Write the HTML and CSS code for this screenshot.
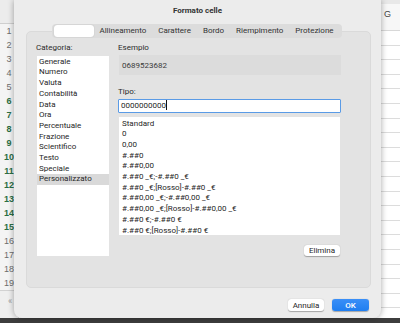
FILE: index.html
```html
<!DOCTYPE html>
<html lang="it">
<head>
    <meta charset="UTF-8" />
    <title>Formato celle</title>
    <link rel="stylesheet" href="styles.css">
</head>
<body>
    <div class="app">
        <div class="sheet">
            <div class="rowhead">
                <div class="corner"></div>
                <div class="num">1</div>
                <div class="num">2</div>
                <div class="num">3</div>
                <div class="num">4</div>
                <div class="num">5</div>
                <div class="num sel">6</div>
                <div class="num sel">7</div>
                <div class="num sel">8</div>
                <div class="num sel">9</div>
                <div class="num sel">10</div>
                <div class="num sel">11</div>
                <div class="num sel">12</div>
                <div class="num sel">13</div>
                <div class="num sel">14</div>
                <div class="num sel">15</div>
                <div class="num">16</div>
                <div class="num">17</div>
                <div class="num">18</div>
                <div class="num">19</div>
                <div class="hscroll">«</div>
            </div>
            <div class="grid">
                <div class="colhead"><span class="col">G</span></div>
                <div class="cells"></div>
            </div>
        </div>
        <div class="taskbar"></div>

        <!-- Formato celle sheet -->
        <div class="dialog">
            <div class="title">Formato celle</div>
            <div class="tabs">
                <span class="tab on"></span>
                <span class="tab">Allineamento</span>
                <span class="tab">Carattere</span>
                <span class="tab">Bordo</span>
                <span class="tab">Riempimento</span>
                <span class="tab">Protezione</span>
            </div>
            <div class="panel">
                <div class="left">
                    <div class="label">Categoria:</div>
                    <ul class="list categories">
                        <li>Generale</li>
                        <li>Numero</li>
                        <li>Valuta</li>
                        <li>Contabilità</li>
                        <li>Data</li>
                        <li>Ora</li>
                        <li>Percentuale</li>
                        <li>Frazione</li>
                        <li>Scientifico</li>
                        <li>Testo</li>
                        <li>Speciale</li>
                        <li class="active">Personalizzato</li>
                    </ul>
                </div>
                <div class="right">
                    <div class="label">Esempio</div>
                    <div class="sample">0689523682</div>
                    <div class="label tipo">Tipo:</div>
                    <div class="input">0000000000<span class="caret"></span></div>
                    <ul class="list formats">
                        <li>Standard</li>
                        <li>0</li>
                        <li>0,00</li>
                        <li>#.##0</li>
                        <li>#.##0,00</li>
                        <li>#.##0 _€;-#.##0 _€</li>
                        <li>#.##0 _€;[Rosso]-#.##0 _€</li>
                        <li>#.##0,00 _€;-#.##0,00 _€</li>
                        <li>#.##0,00 _€;[Rosso]-#.##0,00 _€</li>
                        <li>#.##0 €;-#.##0 €</li>
                        <li>#.##0 €;[Rosso]-#.##0 €</li>
                    </ul>
                    <button class="btn small">Elimina</button>
                </div>
            </div>
            <div class="actions">
                <button class="btn cancel">Annulla</button>
                <button class="btn primary">OK</button>
            </div>
        </div>
    </div>
</body>
</html>
```

FILE: styles.css
```css
* {
    box-sizing: border-box;
    margin: 0;
    padding: 0;
}
body {
    font-family: Roboto, "Liberation Sans", sans-serif;
    font-size: 8px;
    color: #262626;
    background: #fff;
}
.app {
    position: relative;
    width: 400px;
    height: 323px;
    overflow: hidden;
}

/* spreadsheet behind the sheet */
.sheet {
    display: flex;
    height: 318px;
}
.rowhead {
    width: 19px;
    background: #f4f4f4;
    border-right: 1px solid #d6d6d6;
    display: flex;
    flex-direction: column;
}
.corner {
    height: 24px;
    background: #ececec;
    border-bottom: 1px solid #cfcfcf;
}
.num {
    height: 14px;
    line-height: 14px;
    text-align: center;
    font-family: "Liberation Sans", sans-serif;
    font-size: 9px;
    color: #6d6d6d;
}
.num.sel {
    color: #2b6e43;
    font-weight: 700;
}
.hscroll {
    flex: 1;
    border-top: 1px solid #d2d2d2;
    background: #efefef;
    color: #a0a0a0;
    font-size: 9px;
    padding: 5px 0 0 8px;
}
.grid {
    flex: 1;
    display: flex;
    flex-direction: column;
}
.colhead {
    height: 31px;
    display: flex;
    justify-content: flex-end;
    border-top: 4px solid #e8e8e8;
    border-bottom: 1px solid #d8d8d8;
    background: #f7f7f7;
}
.col {
    width: 18px;
    padding: 5px 0 0 2px;
    font-family: "Liberation Sans", sans-serif;
    font-size: 9px;
    color: #444;
}
.cells {
    flex: 1;
    background: repeating-linear-gradient(to bottom, #fff 0 13.6px, #dcdcdc 13.6px 14.6px);
}
.taskbar {
    height: 5px;
    background: #3d3d3d;
}

/* dialog */
.dialog {
    position: absolute;
    left: 14px;
    top: 0;
    width: 367px;
    height: 318px;
    background: #ececec;
    border-radius: 0 0 8px 8px;
    box-shadow: 0 0 6px rgba(0, 0, 0, 0.35);
    display: flex;
    flex-direction: column;
}
.title {
    height: 24px;
    line-height: 21px;
    text-align: center;
    font-weight: 700;
    color: #333;
}
.tabs {
    position: relative;
    z-index: 1;
    align-self: center;
    width: 290px;
    height: 14px;
    margin: 0 2px -7px 0;
    padding: 1px 2px;
    display: flex;
    background: #dcdcdc;
    border-radius: 4px;
}
.tab {
    flex: auto;
    text-align: center;
    line-height: 12px;
    color: #333;
}
.tab.on {
    flex: none;
    width: 40px;
    background: #fff;
    border-radius: 3px;
    box-shadow: 0 0 1px rgba(0, 0, 0, 0.25);
}
.panel {
    height: 257px;
    margin: 0 10px 0 12px;
    padding: 11px 29px 0 9px;
    background: #e3e3e3;
    border: 1px solid #dadada;
    border-radius: 5px;
    display: flex;
    gap: 9px;
}
.left {
    width: 73px;
}
.right {
    flex: 1;
    display: flex;
    flex-direction: column;
}
.label {
    height: 10px;
    line-height: 10px;
    color: #2b2b2b;
}
.list {
    list-style: none;
    background: #fff;
    overflow: hidden;
}
.list li {
    line-height: 10.7px;
    white-space: nowrap;
}
.categories {
    height: 200px;
    margin: 3px 0 0 1px;
    padding-top: 0.7px;
}
.categories li {
    padding-left: 2px;
}
.categories .active {
    background: #d9d9d9;
}
.sample {
    height: 20px;
    margin: 2px 0 0 1px;
    padding-left: 3px;
    line-height: 21px;
    background: #dcdcdc;
    color: #3a3a3a;
}
.tipo {
    margin-top: 12px;
}
.input {
    height: 14px;
    margin-top: 2px;
    padding-left: 2px;
    line-height: 11px;
    background: #fff;
    border: 1.5px solid #5a9be6;
    border-radius: 1px;
}
.caret {
    display: inline-block;
    width: 1px;
    height: 10px;
    vertical-align: -2px;
    background: #111;
}
.formats {
    height: 118px;
    margin: 4px 1px 0 1px;
    padding: 1.5px 0 0 3px;
}
.btn {
    height: 12px;
    font-family: inherit;
    font-size: 8px;
    color: #262626;
    background: #fff;
    border: none;
    border-radius: 3px;
    box-shadow: 0 0.5px 1px rgba(0, 0, 0, 0.3);
}
.btn.small {
    align-self: flex-end;
    width: 36px;
    height: 11px;
    margin: 10px 1px 0 0;
}
.actions {
    display: flex;
    justify-content: flex-end;
    gap: 8px;
    margin-top: 11px;
    padding-right: 12px;
}
.cancel {
    width: 36px;
}
.primary {
    width: 37px;
    color: #fff;
    font-weight: 500;
    background: linear-gradient(#3a8ff7, #1f7ef0);
}
```
